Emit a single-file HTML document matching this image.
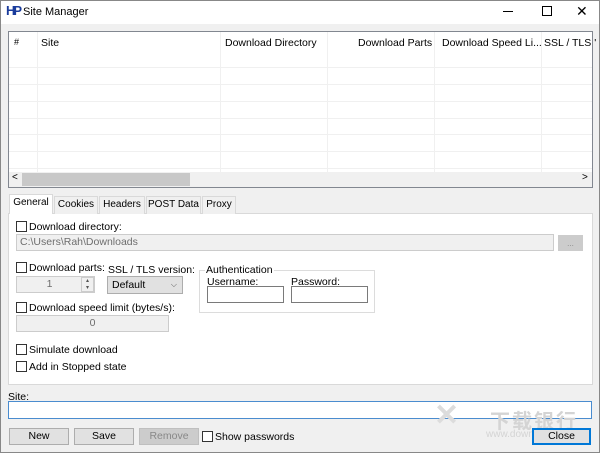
<!DOCTYPE html>
<html><head><meta charset="utf-8"><style>
*{box-sizing:border-box;margin:0;padding:0}
body{width:600px;height:453px;background:#f0f0f0;font-family:"Liberation Sans","Noto Sans CJK SC",sans-serif;font-size:10.5px;color:#000;position:relative;overflow:hidden}
.a{position:absolute}
.title{left:0;top:0;width:600px;height:24px;background:#fff}
.list{left:8px;top:31px;width:585px;height:157px;background:#fff;border:1px solid #828790}
.vl{position:absolute;top:0;width:1px;height:140px;background:#f0f0f0}
.hl{position:absolute;left:0;width:583px;height:1px;background:#f0f0f0}
.cb{display:inline-block;width:11px;height:11px;border:1px solid #333;background:#fff;vertical-align:-2px;margin-right:2px}
.inp{background:#f0f0f0;border:1px solid #ccc;color:#6d6d6d}
.btn{background:#e1e1e1;border:1px solid #adadad;text-align:center;line-height:15px}
.tab{top:196px;height:18px;background:#f0f0f0;border:1px solid #d9d9d9;border-bottom:none;line-height:16px;text-align:center;white-space:nowrap;font-size:10px}
</style></head><body>
<div class="a title"></div>
<div class="a" style="left:6px;top:3px;font-weight:bold;color:#1b3c9c;font-size:13px;letter-spacing:-2px">HP</div>
<div class="a" style="left:23px;top:6px;font-size:11px">Site Manager</div>
<div class="a" style="left:503px;top:11px;width:10px;height:1px;background:#000"></div>
<div class="a" style="left:542px;top:6px;width:10px;height:10px;border:1px solid #000"></div>
<div class="a" style="left:576px;top:3px;font-size:14px">✕</div>

<div class="a list">
<div class="vl" style="left:28px"></div><div class="vl" style="left:211px"></div><div class="vl" style="left:318px"></div><div class="vl" style="left:425px"></div><div class="vl" style="left:532px"></div>
<div class="hl" style="top:35px"></div><div class="hl" style="top:52px"></div><div class="hl" style="top:69px"></div><div class="hl" style="top:86px"></div><div class="hl" style="top:102px"></div><div class="hl" style="top:119px"></div><div class="hl" style="top:136px"></div>
<div class="a" style="left:5px;top:5px;font-size:9px">#</div>
<div class="a" style="left:32px;top:5px">Site</div>
<div class="a" style="left:216px;top:5px">Download Directory</div>
<div class="a" style="left:349px;top:5px">Download Parts</div>
<div class="a" style="left:433px;top:5px;white-space:nowrap">Download Speed Li...</div>
<div class="a" style="left:535px;top:5px;white-space:nowrap">SSL / TLS '</div>
<div class="a" style="left:0;top:140px;width:583px;height:15px;background:#f0f0f0"></div>
<div class="a" style="left:13px;top:141px;width:168px;height:13px;background:#c8c8c8"></div>
<div class="a" style="left:3px;top:140px;font-size:10px">&lt;</div>
<div class="a" style="left:573px;top:140px;font-size:10px">&gt;</div>
</div>

<div class="a" style="left:8px;top:213px;width:585px;height:172px;background:#fff;border:1px solid #d9d9d9"></div>
<div class="a tab" style="left:9px;top:194px;width:44px;height:20px;background:#fff;z-index:2">General</div>
<div class="a tab" style="left:54px;width:44px">Cookies</div>
<div class="a tab" style="left:99px;width:46px">Headers</div>
<div class="a tab" style="left:146px;width:55px">POST Data</div>
<div class="a tab" style="left:202px;width:34px">Proxy</div>

<div class="a" style="left:16px;top:221px"><span class="cb"></span>Download directory:</div>
<div class="a inp" style="left:16px;top:234px;width:538px;height:17px;padding:1px 3px">C:\Users\Rah\Downloads</div>
<div class="a btn" style="left:558px;top:235px;width:25px;height:16px;background:#ccc;border-color:#ccc;color:#888;font-size:8px">...</div>

<div class="a" style="left:16px;top:262px"><span class="cb"></span>Download parts:</div>
<div class="a inp" style="left:16px;top:276px;width:79px;height:17px;text-align:center;padding-right:12px;line-height:15px">1</div>
<div class="a" style="left:81px;top:277px;width:13px;height:15px;border:1px solid #ccc;font-size:6px;line-height:7px;text-align:center;color:#555">▴<br>▾</div>
<div class="a" style="left:108px;top:264px">SSL / TLS version:</div>
<div class="a" style="left:107px;top:276px;width:76px;height:18px;background:#e1e1e1;border:1px solid #adadad;padding:1px 4px;line-height:14px">Default<span style="position:absolute;right:5px;font-size:8px;color:#555">⌵</span></div>

<div class="a" style="left:199px;top:270px;width:176px;height:43px;border:1px solid #dcdcdc"></div>
<div class="a" style="left:205px;top:264px;background:#fff;padding:0 1px">Authentication</div>
<div class="a" style="left:207px;top:276px">Username:</div>
<div class="a" style="left:291px;top:276px">Password:</div>
<div class="a" style="left:207px;top:286px;width:77px;height:17px;background:#fff;border:1px solid #7a7a7a"></div>
<div class="a" style="left:291px;top:286px;width:77px;height:17px;background:#fff;border:1px solid #7a7a7a"></div>

<div class="a" style="left:16px;top:302px"><span class="cb"></span>Download speed limit (bytes/s):</div>
<div class="a inp" style="left:16px;top:315px;width:153px;height:17px;text-align:center;line-height:15px">0</div>
<div class="a" style="left:16px;top:344px"><span class="cb"></span>Simulate download</div>
<div class="a" style="left:16px;top:361px"><span class="cb"></span>Add in Stopped state</div>

<div class="a" style="left:8px;top:391px">Site:</div>
<div class="a" style="left:8px;top:401px;width:584px;height:18px;background:#fff;border:1px solid #4a8ccf"></div>

<div class="a" style="left:434px;top:398px;font-size:30px;color:#dcdcdc;font-weight:bold">✕</div>
<div class="a" style="left:490px;top:405px;font-size:20px;color:#d4d4d4;font-weight:bold;letter-spacing:2px">下载银行</div>
<div class="a" style="left:486px;top:429px;font-size:10px;color:#d4d4d4">www.downbank.cn</div>

<div class="a btn" style="left:9px;top:428px;width:60px;height:17px">New</div>
<div class="a btn" style="left:74px;top:428px;width:60px;height:17px">Save</div>
<div class="a btn" style="left:139px;top:428px;width:60px;height:17px;background:#ccc;border-color:#bfbfbf;color:#888">Remove</div>
<div class="a" style="left:202px;top:431px"><span class="cb"></span>Show passwords</div>
<div class="a btn" style="left:532px;top:428px;width:59px;height:17px;border:2px solid #0078d7;line-height:13px">Close</div>
<div class="a" style="left:0;top:0;width:600px;height:453px;border:1px solid #888;pointer-events:none"></div>
</body></html>
